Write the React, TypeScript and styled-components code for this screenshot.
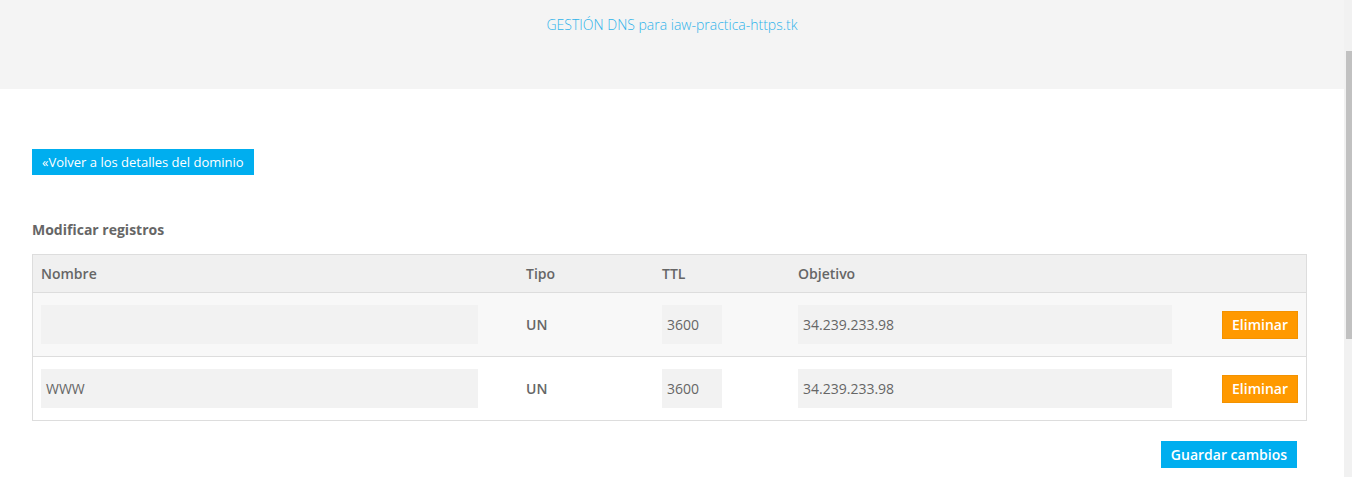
import React from "react";
import styled, { createGlobalStyle } from "styled-components";

const Global = createGlobalStyle`
  html, body { margin: 0; padding: 0; height: 100%; overflow: hidden; }
  body { font-family: "Open Sans", "Noto Sans", sans-serif; color: #666; background: #fff; }
  * { box-sizing: border-box; }
`;

const Page = styled.div`
  display: flex;
  height: 100vh;
`;

const Content = styled.div`
  flex: 1;
  min-width: 0;
`;

const ScrollTrack = styled.div`
  position: relative;
  width: 8px;
  flex: none;
  background: #f1f1f1;
`;

const ScrollThumb = styled.div`
  position: absolute;
  top: 51px;
  right: 0;
  width: 6px;
  height: 288px;
  background: #c1c1c1;
`;

const Header = styled.header`
  height: 89px;
  background: #f4f4f4;
  display: flex;
  justify-content: center;
  padding-top: 15px;
`;

const Title = styled.h1`
  margin: 0;
  font-size: 14px;
  font-weight: 300;
  line-height: 20px;
  color: #2fb3ea;
`;

const Main = styled.main`
  padding: 60px 37px 0 32px;
`;

const BackButton = styled.a`
  display: inline-flex;
  align-items: center;
  height: 26px;
  padding: 0 10px;
  background: #00aeef;
  color: #fff;
  font-size: 13px;
  text-decoration: none;
  cursor: pointer;
`;

const SectionTitle = styled.h2`
  margin: 45px 0 14px;
  font-size: 14px;
  font-weight: 700;
  line-height: 20px;
  color: #666;
`;

const Table = styled.div`
  border: 1px solid #ddd;
`;

const Row = styled.div<{ $variant: "head" | "odd" | "even" }>`
  display: grid;
  grid-template-columns: 485px 136px 136px 1fr auto;
  align-items: center;
  padding: ${(p) => (p.$variant === "head" ? "0 8px" : "12px 8px")};
  height: ${(p) => (p.$variant === "head" ? "37px" : "64px")};
  background: ${(p) =>
    p.$variant === "head" ? "#f0f0f0" : p.$variant === "odd" ? "#f8f8f8" : "#fff"};
  & + & { border-top: 1px solid #ddd; }
`;

const HeadCell = styled.div`
  font-size: 14px;
  font-weight: 600;
  color: #666;
`;

const TypeCell = styled.div`
  font-size: 14px;
  font-weight: 600;
  color: #666;
`;

const Field = styled.div<{ $w: number }>`
  width: ${(p) => p.$w}px;
  height: 39px;
  background: #f2f2f2;
  display: flex;
  align-items: center;
  padding: 0 5px;
  font-size: 14px;
  color: #666;
`;

const DeleteButton = styled.button`
  height: 28px;
  padding: 0 9px;
  background: #ff9900;
  border: 1px solid #f39200;
  color: #fff;
  font-family: inherit;
  font-size: 14px;
  font-weight: 600;
  cursor: pointer;
`;

const Footer = styled.div`
  display: flex;
  justify-content: flex-end;
  padding: 20px 10px 0 0;
`;

const SaveButton = styled.button`
  height: 27px;
  padding: 0 10px;
  background: #00aeef;
  border: none;
  color: #fff;
  font-family: inherit;
  font-size: 14px;
  font-weight: 600;
  cursor: pointer;
`;

const records = [
  { name: "", type: "UN", ttl: "3600", target: "34.239.233.98" },
  { name: "WWW", type: "UN", ttl: "3600", target: "34.239.233.98" },
];

export default function App() {
  return (
    <Page>
      <Global />
      <Content>
        <Header>
          <Title>GESTIÓN DNS para iaw-practica-https.tk</Title>
        </Header>
        <Main>
          <BackButton>«Volver a los detalles del dominio</BackButton>
          <SectionTitle>Modificar registros</SectionTitle>
          <Table>
            <Row $variant="head">
              <HeadCell>Nombre</HeadCell>
              <HeadCell>Tipo</HeadCell>
              <HeadCell>TTL</HeadCell>
              <HeadCell>Objetivo</HeadCell>
              <span />
            </Row>
            {records.map((r, i) => (
              <Row key={i} $variant={i % 2 === 0 ? "odd" : "even"}>
                <Field $w={437}>{r.name}</Field>
                <TypeCell>{r.type}</TypeCell>
                <Field $w={60}>{r.ttl}</Field>
                <Field $w={374}>{r.target}</Field>
                <DeleteButton>Eliminar</DeleteButton>
              </Row>
            ))}
          </Table>
          <Footer>
            <SaveButton>Guardar cambios</SaveButton>
          </Footer>
        </Main>
      </Content>
      <ScrollTrack>
        <ScrollThumb />
      </ScrollTrack>
    </Page>
  );
}
